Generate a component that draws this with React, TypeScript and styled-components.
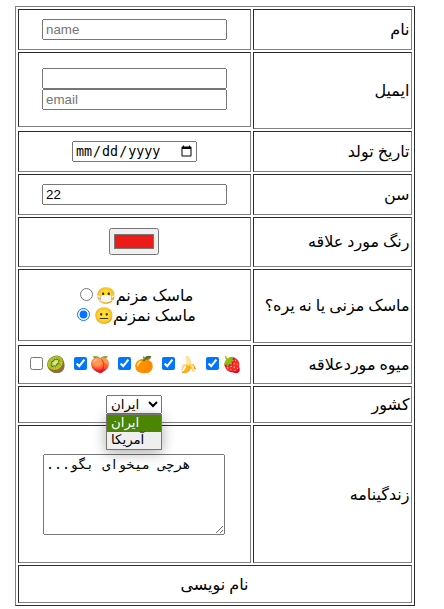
import React from 'react';
import styled, { createGlobalStyle } from 'styled-components';

const DARK = '#2c2c2c';
const GRAY = '#808080';

const GlobalStyle = createGlobalStyle`
  body {
    margin: 0;
    background: #fff;
    color: #000;
    font: 16px/19px "Liberation Serif", "DejaVu Sans", serif;
  }
`;

const Form = styled.form`
  box-sizing: border-box;
  width: 400px;
  height: 600px;
  margin: 6px 0 0 15px;
  padding: 2px;
  display: grid;
  grid-template-columns: 233px 159px;
  grid-template-rows: 41px 77px 41px 41px 50px 74px 39px 37px 138px 38px;
  gap: 2px;
  border: 1px solid;
  border-color: ${GRAY} ${DARK} ${DARK} ${GRAY};
`;

const Cell = styled.div<{ $trim?: number; $right?: number; $bottom?: number }>`
  box-sizing: border-box;
  min-width: 0;
  margin-bottom: ${p => p.$trim ?? 0}px;
  padding: 0 ${p => p.$right ?? 0}px ${p => p.$bottom ?? 0}px 0;
  display: flex;
  flex-direction: column;
  align-items: center;
  justify-content: center;
  border: 1px solid;
  border-color: ${DARK} ${GRAY} ${GRAY} ${DARK};
`;

const LabelCell = styled(Cell)`
  direction: rtl;
  align-items: flex-start;
  padding-right: 1.5px;
  white-space: nowrap;
`;

const SubmitCell = styled(Cell)`
  grid-column: 1 / -1;
  direction: rtl;
`;

const TextInput = styled.input`
  box-sizing: border-box;
  width: 185px;
  height: 21px;
  margin: 0;
  font: 13.333px "Liberation Sans", sans-serif;
`;

const DateInput = styled.input`
  box-sizing: border-box;
  width: 125px;
  height: 21px;
  margin: 0;
  font-family: "DejaVu Sans Mono", monospace;
  font-size: 13.333px;
`;

const ColorInput = styled.input`
  width: 50px;
  height: 27px;
  margin: 0;
`;

const Choice = styled.label`
  display: flex;
  align-items: center;
  height: 20px;
  padding-left: 4px;
  white-space: nowrap;
`;

const Tick = styled.input`
  width: 13px;
  height: 13px;
  margin: 0 4px 2px 0;
  flex: none;
`;

const Emoji = styled.span`
  width: 19px;
  flex: none;
  font-family: "Noto Color Emoji", sans-serif;
`;

const Fruits = styled.div`
  display: flex;
  gap: 8px;
  padding-left: 2px;
`;

const Fruit = styled.label`
  display: flex;
  align-items: center;
  width: 36px;
  height: 20px;
`;

const SelectBox = styled.div`
  position: relative;
  width: 56px;
  height: 19px;
`;

const Select = styled.select`
  display: block;
  box-sizing: border-box;
  width: 56px;
  height: 19px;
  margin: 0;
  font: 13.333px "Liberation Sans", "DejaVu Sans", sans-serif;
`;

const Menu = styled.div`
  position: absolute;
  z-index: 1;
  top: 19px;
  left: 0;
  box-sizing: border-box;
  width: 56px;
  height: 36px;
  border: 1px solid #767676;
  background: #efefef;
  box-shadow: 0 3px 14px rgba(0, 0, 0, 0.32);
  font: 13.333px/15px "Liberation Sans", "DejaVu Sans", sans-serif;
`;

const MenuItem = styled.div<{ $active?: boolean }>`
  height: 17px;
  padding-left: 4px;
  background: ${p => (p.$active ? '#4b8501' : 'transparent')};
  color: ${p => (p.$active ? '#fff' : '#000')};
`;

const Bio = styled.textarea`
  box-sizing: border-box;
  width: 182px;
  height: 81px;
  margin: 0;
  font: 13.333px "DejaVu Sans Mono", monospace;
`;

const fruits = [
  { icon: '🥝', on: false },
  { icon: '🍑', on: true },
  { icon: '🍊', on: true },
  { icon: '🍌', on: true },
  { icon: '🍓', on: true },
];

export default function App() {
  return (
    <>
      <GlobalStyle />
      <Form>
        <Cell><TextInput placeholder="name" /></Cell>
        <LabelCell>نام</LabelCell>

        <Cell $trim={2} $bottom={2}>
          <TextInput />
          <TextInput placeholder="email" />
        </Cell>
        <LabelCell>ایمیل</LabelCell>

        <Cell><DateInput type="date" /></Cell>
        <LabelCell>تاریخ تولد</LabelCell>

        <Cell><TextInput defaultValue="22" /></Cell>
        <LabelCell>سن</LabelCell>

        <Cell $right={1} $bottom={1}><ColorInput type="color" defaultValue="#ed1b18" /></Cell>
        <LabelCell $bottom={1}>رنگ مورد علاقه</LabelCell>

        <Cell $trim={2}>
          <Choice>
            <Tick type="radio" name="mask" />
            <Emoji>😷</Emoji>
            <span>ماسک مزنم</span>
          </Choice>
          <Choice>
            <Tick type="radio" name="mask" defaultChecked />
            <Emoji>😐</Emoji>
            <span>ماسک نمزنم</span>
          </Choice>
        </Cell>
        <LabelCell $bottom={1}>ماسک مزنی یا نه یره؟</LabelCell>

        <Cell>
          <Fruits>
            {fruits.map(f => (
              <Fruit key={f.icon}>
                <Tick type="checkbox" defaultChecked={f.on} />
                <Emoji>{f.icon}</Emoji>
              </Fruit>
            ))}
          </Fruits>
        </Cell>
        <LabelCell>میوه موردعلاقه</LabelCell>

        <Cell $right={1}>
          <SelectBox>
            <Select>
              <option>ایران</option>
              <option>آمریکا</option>
            </Select>
            <Menu>
              <MenuItem $active>ایران</MenuItem>
              <MenuItem>آمریکا</MenuItem>
            </Menu>
          </SelectBox>
        </Cell>
        <LabelCell>کشور</LabelCell>

        <Cell $right={1}><Bio defaultValue={'هرچی میخوای بگو...\u200F'} /></Cell>
        <LabelCell>زندگینامه</LabelCell>

        <SubmitCell $right={1}>نام نویسی</SubmitCell>
      </Form>
    </>
  );
}
